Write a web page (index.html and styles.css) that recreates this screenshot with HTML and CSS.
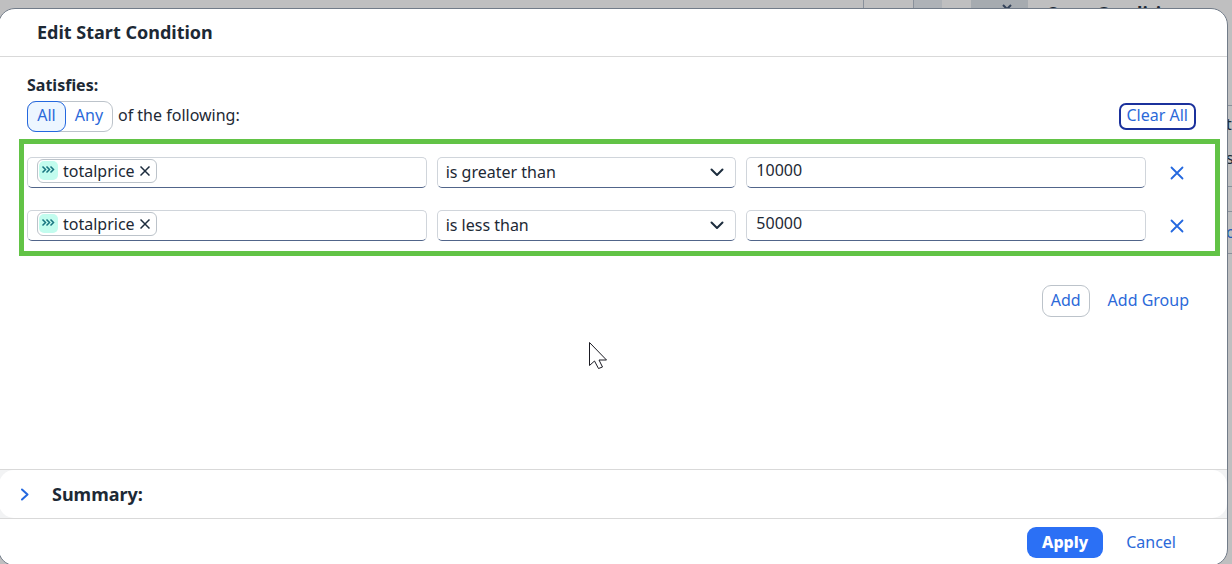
FILE: index.html
```html
<!DOCTYPE html>
<html lang="en">
<head>
<meta charset="utf-8">
<title>Edit Start Condition</title>
<link rel="stylesheet" href="styles.css">
</head>
<body>
<div class="backdrop" aria-hidden="true">
  <span class="bg-tab"></span>
  <span class="bg-shade"></span>
  <span class="bg-close"><svg width="10" height="10" viewBox="0 0 10 10"><path d="M1 1l8 8M9 1L1 9" fill="none" stroke="#34435a" stroke-width="2"/></svg></span>
  <strong class="bg-title">Start Condition</strong>
  <div class="bg-panel">
    <span class="bg-line bg-the">th</span>
    <span class="bg-s">s</span>
    <span class="bg-line bg-gap"></span>
    <span class="bg-line bg-link">o</span>
    <span class="bg-line"></span>
  </div>
</div>
<main class="dialog" role="dialog" aria-labelledby="title">
  <header class="dialog-header"><h1 id="title">Edit Start Condition</h1></header>
  <section class="content">
    <h2 class="label">Satisfies:</h2>
    <div class="toolbar">
      <div class="segments">
        <button class="segment selected" type="button" aria-pressed="true">All</button>
        <button class="segment" type="button" aria-pressed="false">Any</button>
      </div>
      <span class="hint">of the following:</span>
      <button class="clear" type="button">Clear All</button>
    </div>
    <div class="conditions">
      <div class="row">
        <div class="field token-field">
          <span class="token">
            <svg class="token-icon" width="19" height="19" viewBox="0 0 19 19"><rect width="19" height="19" rx="5" fill="#c2fcee"/><path d="M3.500 5.500l3 3-3 3M7.500 5.500l3 3-3 3M11.500 5.500l3 3-3 3" fill="none" stroke="#187580" stroke-width="1.500"/></svg>
            totalprice
            <button class="remove" type="button" aria-label="Remove totalprice"><svg width="10" height="10" viewBox="0 0 10 10"><path d="M.5.5l9 9M9.500.5l-9 9" fill="none" stroke="#1d2d3e" stroke-width="1.500"/></svg></button>
          </span>
          <input class="token-input" type="text" aria-label="First attribute">
        </div>
        <div class="select-wrap">
          <select class="field select" aria-label="First operator"><option>is greater than</option><option>is less than</option></select>
          <svg class="chevron" width="14" height="9" viewBox="0 0 14 9"><path d="M1.500 1.500L7 7l5.500-5.500" fill="none" stroke="#1d2d3e" stroke-width="2" stroke-linecap="round" stroke-linejoin="round"/></svg>
        </div>
        <input class="field value" type="text" value="10000" aria-label="First value">
        <button class="delete" type="button" aria-label="Delete first condition"><svg width="14" height="14" viewBox="0 0 14 14"><path d="M1.500 1.500l11 11M12.500 1.500l-11 11" fill="none" stroke="#2468df" stroke-width="1.800" stroke-linecap="round"/></svg></button>
      </div>
      <div class="row">
        <div class="field token-field">
          <span class="token">
            <svg class="token-icon" width="19" height="19" viewBox="0 0 19 19"><rect width="19" height="19" rx="5" fill="#c2fcee"/><path d="M3.500 5.500l3 3-3 3M7.500 5.500l3 3-3 3M11.500 5.500l3 3-3 3" fill="none" stroke="#187580" stroke-width="1.500"/></svg>
            totalprice
            <button class="remove" type="button" aria-label="Remove totalprice"><svg width="10" height="10" viewBox="0 0 10 10"><path d="M.5.5l9 9M9.500.5l-9 9" fill="none" stroke="#1d2d3e" stroke-width="1.500"/></svg></button>
          </span>
          <input class="token-input" type="text" aria-label="Second attribute">
        </div>
        <div class="select-wrap">
          <select class="field select" aria-label="Second operator"><option>is less than</option><option>is greater than</option></select>
          <svg class="chevron" width="14" height="9" viewBox="0 0 14 9"><path d="M1.500 1.500L7 7l5.500-5.500" fill="none" stroke="#1d2d3e" stroke-width="2" stroke-linecap="round" stroke-linejoin="round"/></svg>
        </div>
        <input class="field value" type="text" value="50000" aria-label="Second value">
        <button class="delete" type="button" aria-label="Delete second condition"><svg width="14" height="14" viewBox="0 0 14 14"><path d="M1.500 1.500l11 11M12.500 1.500l-11 11" fill="none" stroke="#2468df" stroke-width="1.800" stroke-linecap="round"/></svg></button>
      </div>
    </div>
    <div class="add-actions">
      <button class="add" type="button">Add</button>
      <button class="link-button" type="button">Add Group</button>
    </div>
  </section>
  <section class="summary">
    <button class="summary-toggle" type="button" aria-expanded="false">
      <svg width="8" height="13" viewBox="0 0 8 13"><path d="M1 1.500l5.500 5L1 11.500" fill="none" stroke="#2468df" stroke-width="2" stroke-linecap="round" stroke-linejoin="round"/></svg>
      Summary:
    </button>
  </section>
  <footer class="dialog-footer">
    <button class="apply" type="button">Apply</button>
    <button class="link-button" type="button">Cancel</button>
  </footer>
</main>
<svg class="pointer" width="20" height="29" viewBox="0 0 20 29" aria-hidden="true"><path d="M1.500 1.500V24.500L6.500 20l4 7.500 4-1.500-3.500-7H18.500Z" fill="#fff" stroke="#1a1a22" stroke-width="1"/></svg>
</body>
</html>
```
FILE: styles.css
```css
* { box-sizing: border-box; }
body {
  margin: 0;
  height: 100vh;
  overflow: hidden;
  padding: 8px 4px 0 0;
  background: #bfbfc0;
  color: #1d2935;
  font: 16px/20px "Noto Sans", sans-serif;
}
button, input, select { font: inherit; color: inherit; }
button { background: none; border: 0; padding: 0; cursor: pointer; color: #2b69d9; }
h1, h2 { margin: 0; }
svg { flex: none; }

.backdrop { position: absolute; inset: 0; overflow: hidden; }
.bg-tab, .bg-shade, .bg-close, .bg-title, .bg-panel { position: absolute; top: 0; }
.bg-tab { right: 318px; width: 51px; height: 8px; border: solid #8a919b; border-width: 0 1px; }
.bg-shade { right: 290px; width: 28px; height: 8px; background: #aeb2b7; }
.bg-close { right: 204px; width: 57px; height: 8px; padding: 4px 0 0 31px; background: #a6abb0; line-height: 0; }
.bg-title { right: 48px; top: 3px; font-size: 18px; white-space: nowrap; }
.bg-panel { right: 0; top: 105px; width: 6px; height: 149px; overflow: hidden; display: flex; flex-direction: column; }
.bg-line { border-top: 1px solid #8a919b; }
.bg-the { height: 43px; padding-top: 8px; }
.bg-s { height: 38px; }
.bg-gap { height: 25px; }
.bg-link { height: 42px; padding-top: 10px; color: #2258b5; }

.dialog {
  position: relative;
  height: calc(100vh - 6px);
  margin-left: -2px;
  display: flex;
  flex-direction: column;
  background: #fff;
  border: 1px solid #727c89;
  border-radius: 17px;
  overflow: hidden;
}
.dialog-header { padding: 13px 38px; border-bottom: 1px solid #d9d9d9; }
h1 { font-size: 18px; line-height: 21px; font-weight: 700; }
.content { flex: 1; padding: 18px 7px 0 20px; }
.label { padding-left: 8px; font-size: 16px; line-height: 20px; font-weight: 700; }
.toolbar { display: flex; align-items: center; gap: 5px; margin: 6px 24px 7px 8px; }
.segments { display: flex; height: 31px; border: 1px solid #bcc3ca; border-radius: 9px; }
.segment { width: 46px; margin: -1px 0; border: 1px solid transparent; border-radius: 9px; padding-bottom: 3px; }
.segment.selected { width: 39px; margin-left: -1px; background: #edf6ff; border-color: #2468df; }
.hint { padding-bottom: 3px; }
.clear { height: 27px; margin-left: auto; padding: 0 6px 3px; border: 2px solid #1b319c; border-radius: 7px; }
.conditions { display: grid; gap: 22px; padding: 13px 17px 10px 3px; border: 5px solid #62c346; }
.row { display: grid; grid-template-columns: 4fr 3fr 4fr 42px; column-gap: 10px; }
.field { width: 100%; min-width: 0; height: 31px; background: #fff; border: 1px solid #d0d5db; border-bottom-color: #51658a; border-radius: 5px; outline: 0; }
.token-field { display: flex; align-items: flex-start; padding: 1px 9px; }
.token { display: flex; align-items: center; gap: 5px; height: 24px; padding: 0 2px 1px 1px; border: 1px solid #bcc3ca; border-radius: 6px; line-height: 20px; }
.remove { display: flex; align-items: center; width: 14px; height: 20px; }
.token-input { flex: 1; min-width: 0; height: 24px; border: 0; outline: 0; background: none; }
.select-wrap { position: relative; height: 31px; }
.select { appearance: none; padding: 0 34px 2px 8px; }
.chevron { position: absolute; right: 12px; top: 11px; pointer-events: none; }
.value { padding: 0 9px 5px; }
.delete { display: flex; align-items: center; justify-content: center; height: 31px; padding-top: 1px; }
.add-actions { display: flex; justify-content: flex-end; gap: 18px; padding: 29px 31px 0 0; }
.add { height: 32px; padding: 0 8px 3px; border: 1px solid #bcc3ca; border-radius: 9px; }
.link-button { padding-bottom: 2px; }
.summary { background: #f2f3f4; border: solid #d9d9d9; border-width: 1px 0; }
.summary-toggle { display: flex; align-items: center; gap: 23px; width: 100%; height: 48px; padding: 0 22px; border-radius: 15px; background: #fff; color: #1d2935; font-size: 18px; font-weight: 700; }
.dialog-footer { display: flex; justify-content: flex-end; gap: 23px; padding: 8px 51px 7px; }
.apply { height: 31px; padding: 0 15px 2px; border-radius: 9px; background: #2b70f5; color: #fff; font-weight: 800; }
.pointer { position: absolute; left: 588px; top: 341px; }
```
